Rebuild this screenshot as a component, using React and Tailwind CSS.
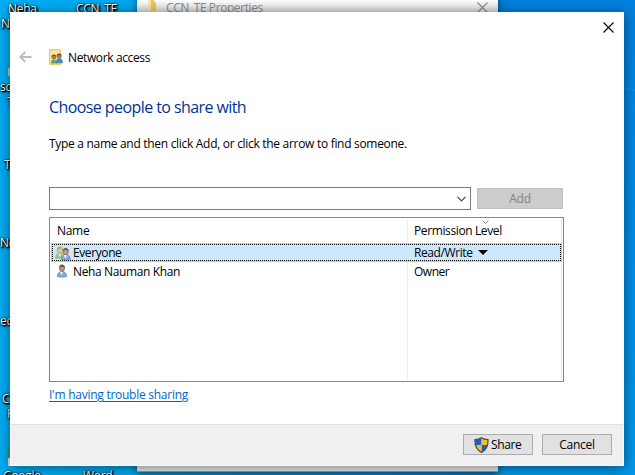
import React from "react";

const desktopLabels = [
  { text: "Neha", pos: "left-[8px] top-[1px]" },
  { text: "N", pos: "left-[1px] top-[16px]" },
  { text: "CCN_TE", pos: "left-[76px] top-[1px]" },
  { text: "sc", pos: "left-[0px] top-[79px]" },
  { text: "T", pos: "left-[7px] top-[94px]" },
  { text: "T", pos: "left-[4px] top-[157px]" },
  { text: "Ne", pos: "left-[0px] top-[235px]" },
  { text: "ec", pos: "left-[0px] top-[313px]" },
  { text: "C", pos: "left-[2px] top-[391px]" },
  { text: "P", pos: "left-[7px] top-[406px]" },
  { text: "Google", pos: "left-[3px] top-[468px]" },
  { text: "Word", pos: "left-[83px] top-[468px]" },
];

function DesktopLabel({ text, pos }) {
  return (
    <span
      className={`absolute whitespace-nowrap text-[12px] leading-[16px] tracking-[-0.3px] text-white [text-shadow:1px_1px_1px_#000,0_0_2px_#000,1px_1px_2px_#000,1px_1px_3px_#000] ${pos}`}
    >
      {text}
    </span>
  );
}

function CloseIcon({ className = "" }) {
  return (
    <svg viewBox="0 0 11 11" className={`h-[11px] w-[11px] ${className}`} fill="none" stroke="currentColor" strokeWidth="1.1">
      <path d="M0.5 0.5 L10.5 10.5 M10.5 0.5 L0.5 10.5" />
    </svg>
  );
}

function BackArrow() {
  return (
    <svg viewBox="0 0 13 12" className="h-[12px] w-[13px]" fill="none" stroke="#bdbdbd" strokeWidth="1.8">
      <path d="M12.5 6 H1.5 M6.3 1 L1.3 6 L6.3 11" />
    </svg>
  );
}

function NetworkIcon() {
  return (
    <svg viewBox="0 0 15 16" className="h-[16px] w-[15px]">
      <path d="M0.5 0.5 H11.5 V15.5 H0.5 Z" fill="#fbe38f" stroke="#ecca60" />
      <path d="M1.8 14.6 C1.8 11.8 3 10.4 5 10.4 S8.4 11.8 8.4 14.6 Z" fill="#6ba06e" />
      <circle cx="4.9" cy="8.2" r="2.4" fill="#a9794f" />
      <path d="M2.4 7.8 C2.4 4.6 7.6 4.6 7.4 7.8 C6.3 6.8 4 6.8 2.4 7.8Z" fill="#6f5a40" />
      <path d="M7 14.3 C7 10.6 8.5 9.3 10.3 9.3 S13.8 10.6 13.8 14.3 Z" fill="#3f8db8" />
      <circle cx="10.2" cy="7.2" r="2.4" fill="#a9794f" />
      <path d="M7.7 6.8 C7.6 3.8 12.9 3.8 12.7 6.8 C11.5 5.8 9.5 5.8 7.7 6.8Z" fill="#5e5145" />
    </svg>
  );
}

function EveryoneIcon() {
  return (
    <svg viewBox="0 0 16 16" className="h-[16px] w-[16px]">
      <path d="M0.7 13.2 C0.7 9.6 2.6 8 5 8 S9 9.6 9 13.2 Z" fill="#a6cf92" stroke="#6f9a62" strokeWidth="0.6" />
      <path d="M3.4 8.4 L4.8 11.5 L6.2 8.4 Z" fill="#eef7e6" />
      <ellipse cx="5" cy="5.2" rx="2.7" ry="3.2" fill="#e6cb90" stroke="#9c8450" strokeWidth="0.6" />
      <path d="M2.2 4.8 C1.8 0.8 8.2 0.8 8 5 C7 3.2 4 3.2 2.2 4.8Z" fill="#bfa05a" />
      <path d="M6.4 14.4 C6.2 11 8.4 9.6 10.8 9.6 S15.4 11 15.2 14.4 C13 15.2 8.6 15.2 6.4 14.4Z" fill="#83abd6" stroke="#557ba8" strokeWidth="0.6" />
      <path d="M8.8 9.9 L10.3 13.4 L12 9.9 Z" fill="#f4f9fd" />
      <ellipse cx="10.7" cy="6.6" rx="2.5" ry="3.2" fill="#c8a078" stroke="#5d5044" strokeWidth="0.6" />
      <path d="M8.3 5.8 C7.6 2 14.2 2 13.6 7.2 C12.9 5.2 11 4.4 8.3 5.8Z" fill="#5e5a57" />
    </svg>
  );
}

function PersonIcon() {
  return (
    <svg viewBox="0 0 16 16" className="h-[16px] w-[16px]">
      <path d="M2.4 13.5 C2 10 4.6 8.4 7 8.4 S12 10 11.6 13.5 C9 14.3 5 14.3 2.4 13.5Z" fill="#83abd6" stroke="#6084ad" strokeWidth="0.7" />
      <path d="M4.9 8.6 L6.4 12.2 L8.2 8.6 Z" fill="#f4f9fd" />
      <ellipse cx="7" cy="5.1" rx="2.5" ry="3.3" fill="#c39878" stroke="#5d5044" strokeWidth="0.7" />
      <path d="M4.5 4.4 C4 0.5 10.5 0.5 9.9 6 C9.2 3.8 7.5 3 4.5 4.4Z" fill="#5e5a57" />
    </svg>
  );
}

function ShieldIcon() {
  return (
    <svg viewBox="0 0 15 16" className="h-[16px] w-[15px]">
      <defs>
        <clipPath id="shield">
          <path d="M7.5 0.7 C9.2 2 11.5 2.6 14 2.6 C14.2 8.5 12.5 13 7.5 15.4 C2.5 13 0.8 8.5 1 2.6 C3.5 2.6 5.8 2 7.5 0.7Z" />
        </clipPath>
      </defs>
      <g clipPath="url(#shield)">
        <path d="M0 0 H7.5 V8 H0 Z M7.5 8 H15 V16 H7.5 Z" fill="#0d66c4" />
        <path d="M7.5 0 H15 V8 H7.5 Z M0 8 H7.5 V16 H0 Z" fill="#fdb933" />
      </g>
      <path d="M7.5 0.8 C9.2 2 11.5 2.6 14 2.6 C14.2 8.5 12.5 13 7.5 15.3 C2.5 13 0.8 8.5 1 2.6 C3.5 2.6 5.8 2 7.5 0.8Z" fill="none" stroke="#4d4d4d" strokeWidth="1.3" />
    </svg>
  );
}

function PropertiesWindow() {
  return (
    <div className="absolute left-[137px] top-[-8px] flex h-[480px] w-[361px] flex-col bg-[#f0f0f0] shadow-[0_2px_8px_rgba(0,0,0,0.5)]">
      <div className="flex h-[20px] items-start bg-linear-to-b from-white from-40% to-[#dadada] pl-[10px] pr-[10px] text-[#8a8a8a]">
        <svg viewBox="0 0 10 14" className="mt-[7px] h-[13px] w-[10px]">
          <path d="M1 0 H5 V13 H1 Z" fill="#f8e3a0" />
          <path d="M4 0 H7.5 V3 L9.5 5 V13 H4 Z" fill="#e8c663" />
        </svg>
        <span className="ml-[9px] mt-[8px] whitespace-nowrap text-[12px] leading-[16px] tracking-[-0.42px]">CCN_TE Properties</span>
        <CloseIcon className="ml-auto mt-[10px]" />
      </div>
      <div className="flex-1 border-b border-[#9a9a9a]" />
    </div>
  );
}

function Dialog() {
  return (
    <div className="absolute left-[10px] top-[12px] flex h-[454px] w-[614px] flex-col bg-white text-[12px] leading-[16px] tracking-[-0.3px] text-black shadow-[0_2px_12px_rgba(0,0,0,0.5)]">
      <div className="flex h-[30px] items-start justify-end pr-[10px] pt-[10px]">
        <CloseIcon />
      </div>
      <div className="flex h-[32px] items-start pl-[9px]">
        <div className="pt-[9px]"><BackArrow /></div>
        <div className="ml-[17px] pt-[7px]"><NetworkIcon /></div>
        <span className="ml-[4px] whitespace-nowrap pt-[8px] tracking-[-0.37px]">Network access</span>
      </div>
      <main className="flex flex-1 flex-col pl-[39px]">
        <h1 className="mt-[22px] whitespace-nowrap text-[16px] leading-[22px] tracking-[-0.58px] text-[#003399]">Choose people to share with</h1>
        <p className="mt-[18px] whitespace-nowrap">Type a name and then click Add, or click the arrow to find someone.</p>
        <div className="mt-[35px] flex h-[23px] items-center gap-[6px]">
          <div className="flex h-[23px] w-[422px] items-center justify-end border border-[#7a7a7a] pr-[4px]">
            <svg viewBox="0 0 9 6" className="h-[6px] w-[9px]" fill="none" stroke="#444" strokeWidth="1.2">
              <path d="M0.5 0.8 L4.5 4.8 L8.5 0.8" />
            </svg>
          </div>
          <button className="h-[21px] w-[86px] border border-[#bfbfbf] bg-[#cccccc] text-[#838383]">Add</button>
        </div>
        <div className="mt-[7px] flex h-[165px] w-[515px] flex-col border border-[#828790] p-px">
          <div className="flex h-[24px]">
            <div className="w-[357px] border-r border-[#e5eff8] pl-[6px] pt-[4px]">Name</div>
            <div className="flex w-[154px] flex-col border-r border-[#e5e5e5] pl-[6px]">
              <svg viewBox="0 0 7 4" className="ml-[68px] mt-px h-[4px] w-[7px]" fill="none" stroke="#888">
                <path d="M0.5 0.5 L3.5 3.5 L6.5 0.5" />
              </svg>
              <span className="mt-[-1px] whitespace-nowrap tracking-[-0.38px]">Permission Level</span>
            </div>
          </div>
          <div className="h-[19px] w-[511px] border border-[#99d1ff] bg-[#cce8ff]">
            <div className="flex h-[17px] items-center border border-dotted border-black">
              <div className="flex w-[355px] items-center pl-[2px]">
                <EveryoneIcon />
                <span className="ml-[2px] tracking-[-0.4px]">Everyone</span>
              </div>
              <div className="flex items-center gap-[5px] pl-[6px]">
                <span className="tracking-[-0.4px]">Read/Write</span>
                <svg viewBox="0 0 10 5" className="h-[5px] w-[10px]"><path d="M0 0 H10 L5 5 Z" fill="#000" /></svg>
              </div>
            </div>
          </div>
          <div className="flex flex-1">
            <div className="flex w-[357px] items-start border-r border-[#e5eff8] pl-[4px] pt-px">
              <PersonIcon />
              <span className="ml-[2px] mt-px tracking-[-0.37px]">Neha Nauman Khan</span>
            </div>
            <div className="w-[154px] border-r border-[#e5e5e5] pl-[6px] pt-[2px] tracking-[-0.5px]">Owner</div>
          </div>
        </div>
        <a className="mt-[5px] self-start whitespace-nowrap tracking-[-0.26px] text-[#0066cc] underline underline-offset-2">I'm having trouble sharing</a>
      </main>
      <footer className="mx-px mb-px flex h-[41px] items-start justify-end gap-[9px] border-t border-[#dfdfdf] bg-[#f0f0f0] pr-[11px] pt-[9px]">
        <button className="flex h-[21px] w-[70px] items-center border border-[#adadad] bg-[#e1e1e1] pl-[10px] tracking-[-0.4px]">
          <ShieldIcon />
          <span className="ml-[2px]">Share</span>
        </button>
        <button className="h-[21px] w-[70px] border border-[#adadad] bg-[#e1e1e1]">Cancel</button>
      </footer>
    </div>
  );
}

export default function App() {
  return (
    <div className="relative h-[475px] w-[635px] overflow-hidden bg-linear-to-r from-[#00adf3] from-5% to-[#0083e2] [font-family:'Open_Sans','Noto_Sans',sans-serif]">
      <div className="absolute right-0 top-0 h-full w-[140px] bg-linear-to-b from-[#0080e0] to-[#0098ea]" />
      <svg viewBox="0 0 14 8" className="absolute left-[622px] top-[85px] h-[8px] w-[14px]" fill="none" stroke="#1a94e6">
        <path d="M0 2 L14 6" />
      </svg>
      <div className="absolute left-[8px] top-[68px] h-[8px] w-[4px] bg-[#c5cacf]" />
      <div className="absolute left-[8px] top-[444px] h-[16px] w-[6px] rounded-l-full bg-[#3f9b4b]" />
      <div className="absolute left-[8px] top-[458px] h-[8px] w-[4px] bg-[#e8e8e8]" />
      {desktopLabels.map((l, i) => (
        <DesktopLabel key={i} text={l.text} pos={l.pos} />
      ))}
      <PropertiesWindow />
      <Dialog />
    </div>
  );
}
